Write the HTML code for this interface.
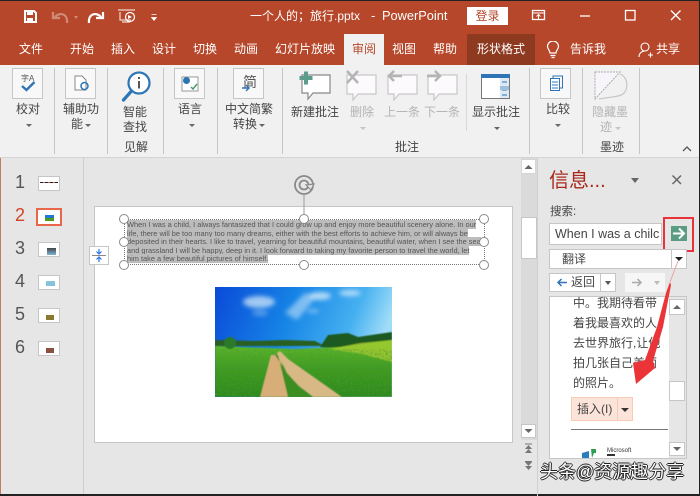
<!DOCTYPE html>
<html><head><meta charset="utf-8"><style>
html,body{margin:0;padding:0;width:700px;height:496px;overflow:hidden;background:#e6e6e6}
body{position:relative;font-family:"Liberation Sans","Noto Sans CJK SC",sans-serif}
.a{position:absolute;white-space:nowrap}
.t{position:absolute;white-space:nowrap;color:#fff;font-size:12px;line-height:16px;top:41px}
.r{position:absolute;white-space:nowrap;color:#444;font-size:12px;line-height:15px;text-align:center}
.g{color:#b4b4b4}
.sep{position:absolute;top:68px;height:86px;width:1px;background:#c6c6c6}
.ib{position:absolute;top:68px;width:31px;height:31px;background:#f8f8f8;border:1px solid #c6c6c6;box-sizing:border-box}
.n{position:absolute;left:15px;font-size:18px;color:#555;line-height:20px}
.th{position:absolute;left:38px;width:22px;height:15px;background:#fff;border:1px solid #c6c6c6;box-sizing:border-box}
.h{position:absolute;width:8px;height:8px;border:1.5px solid #8a8a8a;border-radius:50%;background:#fff}
.ar{position:absolute;width:0;height:0;border-left:3px solid transparent;border-right:3px solid transparent;border-top:3px solid #666}
.sb{position:absolute;background:#fff;border:1px solid #c6c6c6;box-sizing:border-box}
.p{position:absolute;left:573px;font-size:12px;color:#444;line-height:20px;white-space:nowrap}
</style></head><body>
<div class="a" style="left:0;top:0;width:700px;height:65px;background:#b7472a"></div>
<div class="a" style="left:0;top:0;width:700px;height:1px;background:#222"></div>

<svg class="a" style="left:22px;top:8px" width="140" height="18" viewBox="0 0 140 18">
<path d="M3 3h9l2 2v9H3z" fill="none" stroke="#fff" stroke-width="2"/><rect x="5" y="3" width="6" height="4" fill="#fff"/><rect x="5" y="10" width="6" height="5" fill="#fff"/>
<path d="M33 9c4-5 13-4 12 6M31 4v6h7" fill="none" stroke="#cf8a78" stroke-width="2.200"/>
<path d="M52 8h4l-2 3z" fill="#cf8a78"/>
<path d="M79 9c-4-5-13-4-12 6M81 4v6h-7" fill="none" stroke="#fff" stroke-width="2.200"/>
<path d="M96 2h17M98 4v8h11" fill="none" stroke="#f0d8d0" stroke-width="1.200"/><circle cx="108" cy="9" r="4.500" fill="none" stroke="#fff" stroke-width="1.200"/><path d="M106 7l4 2-4 2z" fill="#fff"/><path d="M100 14h8" stroke="#fff"/>
<path d="M129.500 9.500h5l-2.500 3zM129.500 6.500h5" fill="#fff" stroke="#fff" stroke-width=".7"/>
</svg>

<div class="a" style="left:250px;top:8px;font-size:12px;line-height:16px;color:#fff">一个人的；旅行.pptx</div>
<div class="a" style="left:371px;top:8px;font-size:13px;line-height:16px;color:#fff">-</div>
<div class="a" style="left:382px;top:8px;font-size:12.800px;line-height:16px;color:#fff">PowerPoint</div>
<div class="a" style="left:467px;top:7px;width:41px;height:18px;background:#fff;color:#b7472a;font-size:12px;line-height:18px;text-align:center">登录</div>
<svg class="a" style="left:530px;top:8px" width="170" height="16" viewBox="0 0 170 16">
<rect x="2.500" y="2.500" width="12" height="9" fill="none" stroke="#fff" stroke-width="1.300"/><path d="M2 5h13M8.500 11V7M6.500 8.500l2-2 2 2" fill="none" stroke="#fff"/>
<path d="M50 8h10" stroke="#fff" stroke-width="1.300"/>
<rect x="95.500" y="2.500" width="9.500" height="9.500" fill="none" stroke="#fff" stroke-width="1.300"/>
<path d="M141 2.500l9.500 9.500M150.500 2.500l-9.500 9.500" stroke="#fff" stroke-width="1.400"/>
</svg>

<div class="t" style="left:19px">文件</div>
<div class="t" style="left:70px">开始</div>
<div class="t" style="left:111px">插入</div>
<div class="t" style="left:152px">设计</div>
<div class="t" style="left:193px">切换</div>
<div class="t" style="left:234px">动画</div>
<div class="t" style="left:275px">幻灯片放映</div>
<div class="a" style="left:344px;top:34px;width:40px;height:31px;background:#f1f1f1"></div>
<div class="t" style="left:352px;color:#b7472a">审阅</div>
<div class="t" style="left:392px">视图</div>
<div class="t" style="left:433px">帮助</div>
<div class="a" style="left:467px;top:34px;width:68px;height:31px;background:#8e3a20"></div>
<div class="t" style="left:477px">形状格式</div>
<svg class="a" style="left:545px;top:41px" width="16" height="18" viewBox="0 0 16 18"><path d="M5 12c0-3-2.500-3.500-2.500-6.500a5.500 5.500 0 0 1 11 0C13.500 8.500 11 9 11 12zM5.500 14.500h5M6.500 16.500h3" fill="none" stroke="#fff" stroke-width="1.200"/></svg>
<div class="t" style="left:570px">告诉我</div>
<svg class="a" style="left:638px;top:41px" width="16" height="18" viewBox="0 0 16 18"><circle cx="7" cy="6" r="4" fill="none" stroke="#fff" stroke-width="1.100"/><path d="M1 16c0-4 3-6 6-6M10 14h5M12.500 11.500v5" fill="none" stroke="#fff" stroke-width="1.100"/></svg>
<div class="t" style="left:656px">共享</div>

<!-- ribbon -->
<div class="a" style="left:0;top:65px;width:700px;height:92px;background:#f1f1f1;border-bottom:1px solid #d4d4d4"></div>
<div class="sep" style="left:54px"></div><div class="sep" style="left:107px"></div><div class="sep" style="left:163px"></div><div class="sep" style="left:217px"></div><div class="sep" style="left:282px"></div><div class="sep" style="left:529px"></div><div class="sep" style="left:582px"></div><div class="sep" style="left:639px"></div>
<div class="a" style="left:466px;top:74px;width:1px;height:57px;background:#d8d8d8"></div>

<div class="ib" style="left:12px"></div>
<div class="ib" style="left:65px"></div>
<div class="ib" style="left:174px"></div>
<div class="ib" style="left:233px"></div>
<div class="ib" style="left:540px"></div>
<svg class="a" style="left:0;top:66px" width="700" height="46" viewBox="0 66 700 46">
<path d="M22 86l4.500 4 8-8" fill="none" stroke="#2e75b6" stroke-width="2.400"/>
<path d="M75 76h7l4 4v10H75z" fill="#fff" stroke="#888"/><circle cx="84.500" cy="86" r="3.500" fill="none" stroke="#2e75b6" stroke-width="1.500"/>
<circle cx="139" cy="83" r="10.500" fill="#fff" stroke="#2e75b6" stroke-width="2.200"/><path d="M131.500 91l-8 9" stroke="#2e75b6" stroke-width="3.200" stroke-linecap="round"/><path d="M139 77v2M139 81v7.500" stroke="#555" stroke-width="2"/>
<rect x="182" y="77" width="16" height="14" fill="#fff" stroke="#999"/><circle cx="186.500" cy="80.500" r="3.500" fill="#2e75b6"/><path d="M191 87l2 2 4-5" stroke="#4a9a6a" stroke-width="1.500" fill="none"/>
<path d="M242 88h7M246 85l3 3-3 3" fill="none" stroke="#2e75b6" stroke-width="1.400"/>
<path d="M302 75h28v18h-17l-5 6v-6h-6z" fill="#fff" stroke="#888" stroke-width="1.200"/><path d="M306 71.500v13M299.500 78h13" stroke="#5b9c8c" stroke-width="4"/>
<g fill="#fcfafc" stroke="#c8c8c8" stroke-width="1.200"><path d="M347 75h29v19h-18l-5 6v-6h-6z"/><path d="M388 75h29v19h-18l-5 6v-6h-6z"/><path d="M428 75h29v19h-18l-5 6v-6h-6z"/></g>
<path d="M347 71l11 12M358 71l-11 12" stroke="#b4b4b4" stroke-width="2.500"/>
<path d="M402 76h-13M394 71l-5 5 5 5" fill="none" stroke="#b4b4b4" stroke-width="2.500"/>
<path d="M427 76h13M435 71l5 5-5 5" fill="none" stroke="#b4b4b4" stroke-width="2.500"/>
<rect x="481.500" y="74.500" width="28" height="24" fill="#fff" stroke="#777"/><rect x="481" y="74" width="29" height="4" fill="#2e75b6"/><rect x="500" y="78" width="9" height="20" fill="#dfe9f3"/><path d="M502 82h5M502 90h5M502 95h5" stroke="#2e75b6"/><rect x="500" y="86" width="9" height="4" fill="#9dc0e0"/>
<path d="M550.500 78.500h9v12h-9z" fill="#fff" stroke="#2e75b6"/><path d="M553 78v-2h9.500v12h-3" fill="none" stroke="#2e75b6"/><path d="M552 82h6M552 85h6M552 88h6" stroke="#2e75b6"/>
<path d="M595 72h25l-25 27z" fill="#f8f5fa" stroke="#aaa" stroke-width="1" stroke-dasharray="2 1"/><path d="M620 74c8 3 9 15 3 20-4 3-14 3-24 5" fill="none" stroke="#c6c6c6" stroke-width="1.200"/>
</svg>
<div class="a" style="left:21px;top:74px;font-size:8px;line-height:9px;color:#555">字A</div>
<div class="a" style="left:243px;top:74px;font-size:14px;line-height:16px;color:#555">简</div>

<div class="r" style="left:14px;top:102px;width:28px">校对</div>
<div class="r" style="left:63px;top:102px;width:36px">辅助功</div>
<div class="r" style="left:71px;top:117px;width:12px">能</div>
<div class="r" style="left:121px;top:105px;width:28px;white-space:normal">智能<br>查找</div>
<div class="r" style="left:123px;top:140px;width:26px">见解</div>
<div class="r" style="left:176px;top:102px;width:28px">语言</div>
<div class="r" style="left:224px;top:102px;width:50px">中文简繁</div>
<div class="r" style="left:233px;top:117px;width:24px">转换</div>
<div class="r" style="left:291px;top:105px;width:48px">新建批注</div>
<div class="r g" style="left:350px;top:105px;width:24px">删除</div>
<div class="r g" style="left:384px;top:105px;width:36px">上一条</div>
<div class="r g" style="left:424px;top:105px;width:36px">下一条</div>
<div class="r" style="left:471px;top:105px;width:50px">显示批注</div>
<div class="r" style="left:544px;top:102px;width:28px">比较</div>
<div class="r g" style="left:592px;top:105px;width:36px">隐藏墨</div>
<div class="r g" style="left:600px;top:120px;width:12px">迹</div>
<div class="r" style="left:393px;top:140px;width:28px">批注</div>
<div class="r" style="left:598px;top:140px;width:28px">墨迹</div>
<div class="ar" style="left:26px;top:124px"></div>
<div class="ar" style="left:85px;top:124px"></div>
<div class="ar" style="left:189px;top:124px"></div>
<div class="ar" style="left:259px;top:124px"></div>
<div class="ar" style="left:494px;top:127px"></div>
<div class="ar" style="left:555px;top:124px"></div>
<div class="ar" style="left:360px;top:127px;border-top-color:#c4c4c4"></div>
<div class="ar" style="left:615px;top:127px;border-top-color:#c4c4c4"></div>
<svg class="a" style="left:681px;top:145px" width="12" height="8"><path d="M2 6l4-4 4 4" fill="none" stroke="#555" stroke-width="1.300"/></svg>

<!-- left edge / frames -->
<div class="a" style="left:0;top:158px;width:1px;height:338px;background:#c87a60"></div>
<div class="a" style="left:83px;top:158px;width:1px;height:338px;background:#cfcfcf"></div>
<div class="a" style="left:0;top:494px;width:700px;height:2px;background:#222"></div>
<div class="a" style="left:699px;top:0;width:1px;height:496px;background:#222"></div>

<!-- thumbnails -->
<div class="n" style="top:172px">1</div>
<div class="n" style="top:205px;color:#d04424">2</div>
<div class="n" style="top:238px">3</div>
<div class="n" style="top:271px">4</div>
<div class="n" style="top:304px">5</div>
<div class="n" style="top:337px">6</div>
<div class="th" style="top:176px"><div class="a" style="left:1px;top:5px;width:18px;height:1px;background:repeating-linear-gradient(90deg,#222 0 3px,#c66 3px 5px)"></div></div>
<div class="a" style="left:36px;top:208px;width:26px;height:18px;background:#fff;border:2px solid #e8664a;box-sizing:border-box"><div class="a" style="left:7px;top:5px;width:9px;height:6px;background:linear-gradient(#1e78d8 50%,#4f9a1e 50%)"></div></div>
<div class="th" style="top:242px"><div class="a" style="left:8px;top:5px;width:9px;height:7px;background:linear-gradient(#444,#7bb6d8)"></div></div>
<div class="th" style="top:275px"><div class="a" style="left:7px;top:5px;width:9px;height:5px;background:#86c4dc"></div></div>
<div class="th" style="top:308px"><div class="a" style="left:7px;top:6px;width:8px;height:5px;background:#8a7a30"></div></div>
<div class="th" style="top:341px"><div class="a" style="left:7px;top:6px;width:8px;height:5px;background:#8a5040"></div></div>

<!-- slide -->
<div class="a" style="left:94px;top:206px;width:419px;height:237px;background:#fff;border:1px solid #c6c6c6;box-sizing:border-box"></div>
<div class="a" style="left:89px;top:246px;width:20px;height:19px;background:#fff;border:1px solid #c6c6c6;box-sizing:border-box"></div>
<svg class="a" style="left:89px;top:246px" width="20" height="19"><path d="M3 9.500h14" stroke="#888"/><path d="M10 3v5M7.500 5.500L10 8l2.500-2.500M10 16v-5M7.500 13.500L10 11l2.500 2.500" fill="none" stroke="#2e75e6" stroke-width="1.200"/></svg>
<svg class="a" style="left:292px;top:173px" width="26" height="48" viewBox="0 0 26 48"><circle cx="12" cy="12" r="9" fill="none" stroke="#8a8a8a" stroke-width="1.800"/><circle cx="12" cy="12" r="4.500" fill="none" stroke="#8a8a8a" stroke-width="1.800"/><path d="M14 12l8-1-3 6z" fill="#e6e6e6" stroke="#8a8a8a" stroke-width="1.200"/><path d="M12 22v22" stroke="#999"/></svg>
<div class="a" style="left:124px;top:219px;width:361px;height:46px;border:1px dotted #777;box-sizing:border-box"></div>
<div class="a" style="left:127px;top:221px;width:358px;font-size:7.400px;line-height:8.500px;color:#555;filter:blur(.25px)">
<span style="background:#bcbcbc">When I was a child, I always fantasized that I could grow up and enjoy more beautiful scenery alone. In our</span><br>
<span style="background:#bcbcbc">life, there will be too many too many dreams, either with the best efforts to achieve him, or will always be</span><br>
<span style="background:#bcbcbc">deposited in their hearts. I like to travel, yearning for beautiful mountains, beautiful water, when I see the sea</span><br>
<span style="background:#bcbcbc">and grassland I will be happy, deep in it. I look forward to taking my favorite person to travel the world, let</span><br>
<span style="background:#bcbcbc">him take a few beautiful pictures of himself.</span></div>
<div class="h" style="left:118.500px;top:213.500px"></div><div class="h" style="left:298.500px;top:213.500px"></div><div class="h" style="left:478.500px;top:213.500px"></div>
<div class="h" style="left:118.500px;top:236.500px"></div><div class="h" style="left:478.500px;top:236.500px"></div>
<div class="h" style="left:118.500px;top:259.500px"></div><div class="h" style="left:298.500px;top:259.500px"></div><div class="h" style="left:478.500px;top:259.500px"></div>

<!-- photo -->
<svg class="a" style="left:215px;top:287px" width="177" height="110" viewBox="0 0 177 110">
<defs><linearGradient id="s" x1="0" y1="0" x2="1" y2="0.250"><stop offset="0" stop-color="#0a4ad8"/><stop offset=".45" stop-color="#1684e6"/><stop offset=".8" stop-color="#45b0f0"/><stop offset="1" stop-color="#a0dcf8"/></linearGradient>
<linearGradient id="f" x1="0" y1="0" x2="0" y2="1"><stop offset="0" stop-color="#62bc2a"/><stop offset=".5" stop-color="#3f9c20"/><stop offset="1" stop-color="#2c8a1a"/></linearGradient>
<filter id="b" x="-30%" y="-30%" width="160%" height="160%"><feGaussianBlur stdDeviation="2.500"/></filter>
<filter id="b1"><feGaussianBlur stdDeviation=".6"/></filter>
<filter id="n" x="0" y="0" width="100%" height="100%"><feTurbulence type="fractalNoise" baseFrequency=".45" numOctaves="2" seed="4"/><feColorMatrix values="0 0 0 0 .08 0 0 0 0 .3 0 0 0 0 .05 0 0 0 3 -1.300"/></filter></defs>
<rect width="177" height="110" fill="url(#s)"/>
<g filter="url(#b)" fill="#d0e8fa"><ellipse cx="44" cy="15" rx="16" ry="6" opacity=".75"/><path d="M70 26l20-20 12 3-20 24z" opacity=".55"/><ellipse cx="105" cy="9" rx="11" ry="4" opacity=".8"/><ellipse cx="135" cy="6" rx="11" ry="3" opacity=".8"/><ellipse cx="98" cy="24" rx="6" ry="2" opacity=".5"/><ellipse cx="45" cy="26" rx="8" ry="3" opacity=".35"/></g>
<g filter="url(#b1)">
<path d="M0 53l40 1 30-1 30 1 10 5H0z" fill="#2a5e22"/>
<path d="M105 60l8-12 20-2 10 4 34-5v16l-40 3z" fill="#1c5a20"/>
<path d="M0 59l80 3 45-2 52-7v57H0z" fill="url(#f)"/>
<path d="M115 62l30-6 32-3v22l-30-8z" fill="#a8cc30" opacity=".75"/>
<circle cx="15" cy="56" r="6" fill="#2a7a2a"/>
</g>
<rect x="0" y="62" width="177" height="48" filter="url(#n)" opacity=".55"/>
<g filter="url(#b1)">
<path d="M56 68h6l1-1h2L73 110H45z" fill="#d8ae78"/>
<path d="M62 66l3-2 8 8 54 38H98L75 92z" fill="#d8b884"/>
<path d="M60 68h3L73 110H94L72 86z" fill="#3d8e22"/>
</g>
</svg>

<!-- main scrollbar -->
<div class="a" style="left:521px;top:158px;width:16px;height:282px;background:#dadada"></div>
<div class="sb" style="left:521px;top:159px;width:15px;height:15px;border-color:#d6d6d6"></div>
<div class="sb" style="left:521px;top:217px;width:16px;height:42px"></div>
<div class="sb" style="left:521px;top:424px;width:15px;height:14px"></div>
<svg class="a" style="left:521px;top:159px" width="16" height="312" viewBox="0 0 16 312"><path d="M3.500 10l4-4 4 4zM3.500 270l4 4 4-4z" fill="#666"/><path d="M4 284.500h7v1H4zM4 290l3.500-4 3.500 4zM4 294l3.500-4 3.500 4zM4 302h7v1H4zM4 303l3.500 4 3.500-4zM4 307l3.500 4 3.500-4z" fill="#777"/></svg>
<div class="a" style="left:537px;top:158px;width:1px;height:338px;background:#cfcfcf"></div>

<!-- side panel -->
<div class="a" style="left:549px;top:168px;font-size:20px;line-height:26px;color:#a8291c">信息...</div>
<div class="a" style="left:631px;top:178px;width:0;height:0;border-left:4px solid transparent;border-right:4px solid transparent;border-top:5px solid #666"></div>
<svg class="a" style="left:671px;top:174px" width="12" height="12"><path d="M1.500 1.500l8.500 8.500M10 1.500l-8.500 8.500" stroke="#666" stroke-width="1.500"/></svg>
<div class="a" style="left:550px;top:204px;font-size:11.500px;line-height:16px;color:#444">搜索:</div>
<div class="a" style="left:549px;top:223px;width:113px;height:22px;background:#fff;border:1px solid #c6c6c6;box-sizing:border-box;font-size:12.500px;line-height:20px;color:#444;padding-left:5px;overflow:hidden">When I was a chilc</div>
<div class="a" style="left:663px;top:217px;width:31px;height:35px;border:2px solid #e8333a;box-sizing:border-box"></div>
<div class="a" style="left:671px;top:226px;width:16px;height:15px;background:#5b9c84"></div>
<svg class="a" style="left:671px;top:226px" width="16" height="15"><path d="M2 7.500h11M8 2.500l5 5-5 5" fill="none" stroke="#fff" stroke-width="2"/></svg>
<div class="a" style="left:549px;top:249px;width:138px;height:20px;background:#fff;border:1px solid #c6c6c6;box-sizing:border-box;font-size:12px;line-height:18px;color:#444;padding-left:12px">翻译</div>
<div class="a" style="left:671px;top:250px;width:1px;height:18px;background:#c6c6c6"></div>
<div class="a" style="left:675px;top:257px;width:0;height:0;border-left:4px solid transparent;border-right:4px solid transparent;border-top:4px solid #222"></div>
<div class="a" style="left:549px;top:273px;width:67px;height:19px;background:#fff;border:1px solid #c6c6c6;box-sizing:border-box;font-size:12px;line-height:17px;color:#444;padding-left:21px">返回</div>
<div class="a" style="left:600px;top:274px;width:1px;height:17px;background:#c6c6c6"></div>
<svg class="a" style="left:556px;top:277px" width="12" height="11"><path d="M11 5.500H2M5.500 2L2 5.500 5.500 9" fill="none" stroke="#2e75b6" stroke-width="1.500"/></svg>
<div class="a" style="left:605px;top:281px;width:0;height:0;border-left:3.500px solid transparent;border-right:3.500px solid transparent;border-top:4px solid #555"></div>
<div class="a" style="left:625px;top:273px;width:40px;height:19px;background:#f6f6f6"></div>
<svg class="a" style="left:631px;top:277px" width="12" height="11"><path d="M1 5.500h9M6.500 2L10 5.500 6.500 9" fill="none" stroke="#aaa" stroke-width="1.500"/></svg>
<div class="a" style="left:654px;top:281px;width:0;height:0;border-left:3.500px solid transparent;border-right:3.500px solid transparent;border-top:4px solid #bbb"></div>

<div class="a" style="left:549px;top:296px;width:120px;height:163px;background:#fff"></div>
<div class="a" style="left:669px;top:297px;width:17px;height:161px;background:#e6e6e6"></div>
<div class="a" style="left:549px;top:296px;width:138px;height:163px;border:1px solid #c6c6c6;box-sizing:border-box"></div>
<div class="sb" style="left:669px;top:299px;width:16px;height:16px"></div>
<div class="sb" style="left:669px;top:381px;width:16px;height:20px"></div>
<div class="sb" style="left:669px;top:442px;width:16px;height:14px"></div>
<div class="a" style="left:673px;top:305px;width:0;height:0;border-left:4px solid transparent;border-right:4px solid transparent;border-bottom:4px solid #666"></div>
<div class="a" style="left:673px;top:447px;width:0;height:0;border-left:4px solid transparent;border-right:4px solid transparent;border-top:4px solid #666"></div>
<div class="p" style="top:293px">中。我期待看带</div>
<div class="p" style="top:313px">着我最喜欢的人</div>
<div class="p" style="top:333px">去世界旅行,让他</div>
<div class="p" style="top:353px">拍几张自己美丽</div>
<div class="p" style="top:373px">的照片。</div>
<div class="a" style="left:571px;top:397px;width:62px;height:24px;background:#fde4da;border:1px solid #f7cbb8;box-sizing:border-box;font-size:12px;line-height:22px;color:#444;padding-left:5px">插入(I)</div>
<div class="a" style="left:617px;top:398px;width:1px;height:22px;background:#f7cbb8"></div>
<div class="a" style="left:621px;top:408px;width:0;height:0;border-left:4px solid transparent;border-right:4px solid transparent;border-top:4px solid #333"></div>
<div class="a" style="left:571px;top:429px;width:97px;height:1px;background:#777"></div>
<svg class="a" style="left:581px;top:448px" width="60" height="11"><path d="M1 5l7-2v7H1z" fill="#2a7ac0"/><path d="M10 1h5v4h-2l-2 5z" fill="#2ea050"/><path d="M26 7h8" stroke="#333" stroke-width="2"/></svg>
<div class="a" style="left:607px;top:447px;font-size:6px;line-height:8px;color:#333">Microsoft</div>

<!-- red arrow -->
<svg class="a" style="left:620px;top:260px" width="64" height="130" viewBox="0 0 64 130"><path d="M58 1L50 22" stroke="#f0a0a0" stroke-width="1"/><path d="M50 22L51 25 43 67 33 101 35 108 16 124 13 103 25 100 37 67 46 33z" fill="#ea3438"/></svg>

<!-- watermark -->
<div class="a" style="left:540px;top:462px;font-size:18px;line-height:20px;color:#fff;text-shadow:-1px 0 #222,1px 0 #222,0 -1px #222,0 1px #222">头条@资源趣分享</div>
</body></html>
